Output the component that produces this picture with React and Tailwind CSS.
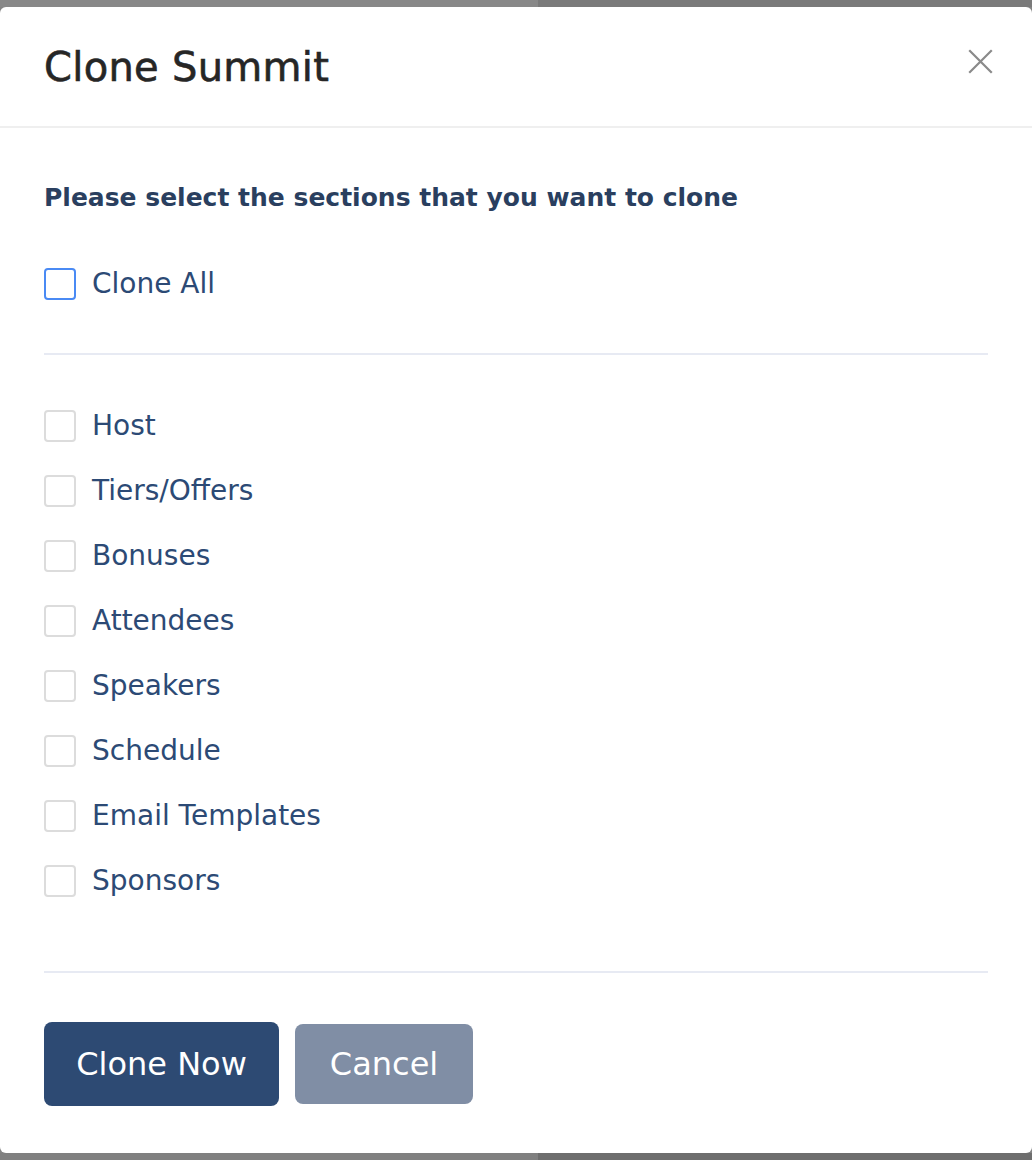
import { useState } from "react";

const sections = [
  "Host",
  "Tiers/Offers",
  "Bonuses",
  "Attendees",
  "Speakers",
  "Schedule",
  "Email Templates",
  "Sponsors",
];

function Box({ checked, focus, onClick }) {
  return (
    <button
      onClick={onClick}
      className={`w-[32px] h-[32px] shrink-0 rounded-[4px] border-2 bg-white flex items-center justify-center ${
        focus ? "border-[#4a8af4]" : "border-[#dcdcdc]"
      }`}
    >
      {checked && (
        <svg width="18" height="18" viewBox="0 0 24 24" fill="none" stroke="#2d4a73" strokeWidth="3">
          <path d="M5 12l5 5 9-10" />
        </svg>
      )}
    </button>
  );
}

function App() {
  const [all, setAll] = useState(false);
  const [picked, setPicked] = useState([]);

  const toggle = (name) => {
    setPicked((p) => (p.includes(name) ? p.filter((x) => x !== name) : [...p, name]));
  };

  return (
    <div
      className="min-h-screen bg-[#848484] flex flex-col"
      style={{ fontFamily: "'DejaVu Sans', 'Noto Sans', sans-serif" }}
    >
      <div className="h-[7px] flex">
        <div className="w-[538px] bg-[#888888]" />
        <div className="flex-1 bg-[#7a7a7a]" />
      </div>

      <div className="bg-white rounded-[6px] flex flex-col">
        {/* header */}
        <div className="h-[121px] border-b-2 border-[#efefef] flex items-center justify-between px-[44px]">
          <h1 className="text-[40px] leading-none text-[#262626] tracking-[0.3px] [-webkit-text-stroke:0.6px_#262626]">
            Clone Summit
          </h1>
          <button className="w-[26px] h-[26px] flex items-center justify-center -mt-[10px] -mr-[5px]">
            <svg width="25" height="25" viewBox="0 0 25 25" stroke="#8a8a8a" strokeWidth="2.2" strokeLinecap="square">
              <path d="M2 2L23 23M23 2L2 23" />
            </svg>
          </button>
        </div>

        {/* body */}
        <div className="px-[44px] pt-[50px]">
          <div className="h-[40px] flex items-center text-[25px] font-bold text-[#2a3f5f]">
            Please select the sections that you want to clone
          </div>

          <div className="mt-[50px] h-[32px] flex items-center gap-[16px] text-[28px] text-[#2c4a75]">
            <Box focus checked={all} onClick={() => setAll(!all)} />
            <span>Clone All</span>
          </div>

          <div className="mt-[53px] h-[2px] bg-[#e7eaf3]" />

          <div className="mt-[55px] flex flex-col gap-[33px]">
            {sections.map((s) => (
              <div key={s} className="h-[32px] flex items-center gap-[16px] text-[28px] text-[#2c4a75]">
                <Box checked={all || picked.includes(s)} onClick={() => toggle(s)} />
                <span>{s}</span>
              </div>
            ))}
          </div>

          <div className="mt-[74px] h-[2px] bg-[#e7eaf3]" />

          <div className="mt-[49px] mb-[47px] h-[84px] flex items-center gap-[16px]">
            <button className="w-[235px] h-[84px] rounded-[8px] bg-[#2d4a73] text-white text-[32px]">
              Clone Now
            </button>
            <button className="w-[178px] h-[80px] rounded-[8px] bg-[#808ea5] text-white text-[32px]">
              Cancel
            </button>
          </div>
        </div>
      </div>

      <div className="h-[7px] flex">
        <div className="w-[538px] bg-[#808080]" />
        <div className="flex-1 bg-[#6e6e6e]" />
      </div>
    </div>
  );
}

export default App;
